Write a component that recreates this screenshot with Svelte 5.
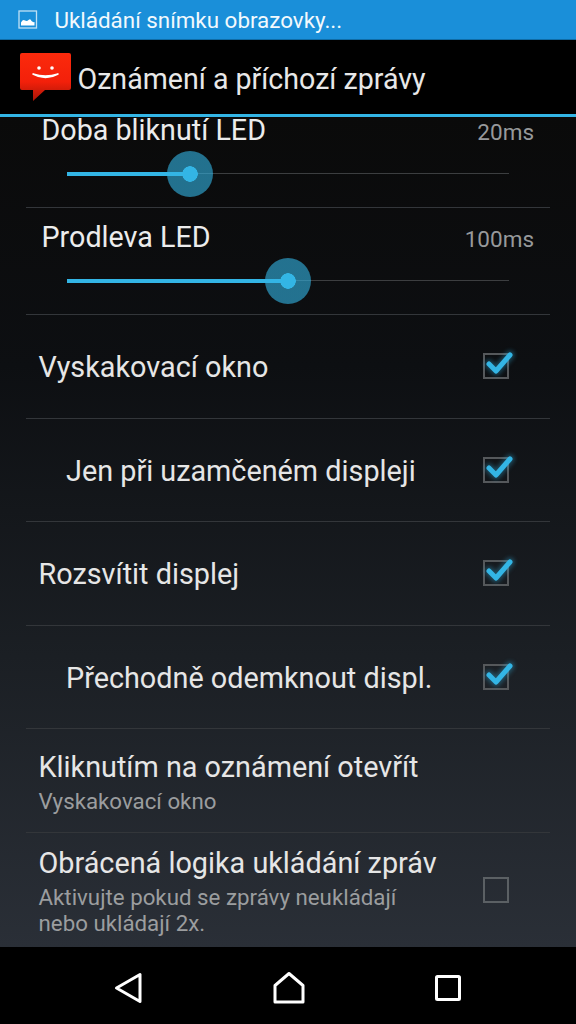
<script>
  const checks = [
    { label: 'Vyskakovací okno', indent: false },
    { label: 'Jen při uzamčeném displeji', indent: true },
    { label: 'Rozsvítit displej', indent: false },
    { label: 'Přechodně odemknout displ.', indent: true }
  ];
</script>

<div class="screen">
  <div class="status">
    <svg class="status-icon" viewBox="0 0 20 19" width="20" height="19">
      <rect x="1" y="1" width="17.5" height="17" fill="none" stroke="#bfe0f5" stroke-width="1.3"/>
      <path d="M3 15.5 V12.5 Q5 9 7 10.5 Q9 11.5 10.5 10 Q12.5 8 13.5 11 Q15 12.5 16.5 12 V15.5 Z" fill="#fff"/>
    </svg>
    <span>Ukládání snímku obrazovky...</span>
  </div>
  <header>
    <svg class="logo" viewBox="0 0 51 48" width="51" height="48">
      <defs>
        <linearGradient id="red" x1="0" y1="0" x2="0" y2="1">
          <stop offset="0" stop-color="#fb2a0c"/>
          <stop offset="0.6" stop-color="#f3200a"/>
          <stop offset="1" stop-color="#a81507"/>
        </linearGradient>
      </defs>
      <path d="M2 0 H49 Q51 0 51 2 V35 Q51 37 49 37 H25 L13 48 V37 H2 Q0 37 0 35 V2 Q0 0 2 0 Z" fill="url(#red)"/>
      <circle cx="19" cy="15" r="1.8" fill="#fff"/>
      <circle cx="32" cy="15" r="1.8" fill="#fff"/>
      <path d="M13 21 Q25.5 28 38 21 Q25.5 25 13 21 Z" fill="#fff" stroke="#fff" stroke-width="1.6" stroke-linejoin="round"/>
    </svg>
    <h1>Oznámení a příchozí zprávy</h1>
  </header>

  <main>
    <section class="slider-row first">
      <div class="slider-head">
        <span class="title">Doba bliknutí LED</span>
        <span class="value">20ms</span>
      </div>
      <div class="track">
        <div class="fill" style="width: 123px"></div>
        <div class="thumb" style="left: 123px"></div>
      </div>
    </section>
    <section class="slider-row">
      <div class="slider-head">
        <span class="title">Prodleva LED</span>
        <span class="value">100ms</span>
      </div>
      <div class="track">
        <div class="fill" style="width: 221px"></div>
        <div class="thumb" style="left: 221px"></div>
      </div>
    </section>

    {#each checks as c}
      <section class="row check-row" class:indent={c.indent}>
        <span class="label">{c.label}</span>
        <span class="box">
          <svg viewBox="0 0 40 34" width="40" height="34">
            <path class="glow" d="M10 19 L17 26 L31 10"/>
            <path class="tick" d="M10 19 L17 26 L31 10"/>
          </svg>
        </span>
      </section>
    {/each}

    <section class="row text-row one">
      <div class="text-block">
        <div class="label">Kliknutím na oznámení otevřít</div>
        <div class="sub">Vyskakovací okno</div>
      </div>
    </section>
    <section class="row text-row last">
      <div class="text-block">
        <div class="label">Obrácená logika ukládání zpráv</div>
        <div class="sub">Aktivujte pokud se zprávy neukládají<br />nebo ukládají 2x.</div>
      </div>
      <span class="box off"></span>
    </section>
  </main>

  <nav>
    <svg viewBox="0 0 28 32" width="28" height="32">
      <path d="M2.5 16 L26 2.5 V29.5 Z" fill="none" stroke="#fff" stroke-width="3" stroke-linejoin="round"/>
    </svg>
    <svg viewBox="0 0 32 32" width="32" height="32">
      <path d="M2 30 V13.5 L16 1.5 L30 13.5 V30 Z" fill="none" stroke="#fff" stroke-width="3" stroke-linejoin="round"/>
    </svg>
    <svg viewBox="0 0 26 26" width="26" height="26">
      <rect x="1.5" y="1.5" width="23" height="23" rx="1" fill="none" stroke="#fff" stroke-width="3"/>
    </svg>
  </nav>
</div>

<style>
  :global(body) {
    margin: 0;
    background: #000;
  }
  .screen {
    width: 576px;
    height: 1024px;
    display: flex;
    flex-direction: column;
    overflow: hidden;
    font-family: Roboto, "Liberation Sans", sans-serif;
    color: #e6e6e6;
  }
  .status {
    height: 39px;
    background: #1a8fd9;
    border-bottom: 1px solid #0f6ca6;
    display: flex;
    align-items: center;
    color: #f2f9fd;
    font-size: 22.4px;
    padding-left: 18px;
    gap: 16.5px;
    flex: none;
  }
  .status-icon {
    flex: none;
  }
  header {
    height: 74px;
    background: #000;
    display: flex;
    align-items: flex-start;
    padding-left: 20px;
    gap: 6.5px;
    border-bottom: 3px solid #33b5e5;
    flex: none;
  }
  .logo {
    margin-top: 13px;
    flex: none;
  }
  h1 {
    margin: 22px 0 0;
    font-weight: 400;
    font-size: 28.6px;
    line-height: 34px;
    color: #e8e8e8;
  }
  main {
    flex: 1;
    min-height: 0;
    background: linear-gradient(#0a0a0a, #0d0f12 30%, #1b1f24 65%, #2a2f37);
    padding: 0 26px;
    display: flex;
    flex-direction: column;
  }
  section {
    border-bottom: 1px solid #33363a;
    box-sizing: border-box;
    flex: none;
  }
  .slider-row {
    height: 107px;
    padding: 14px 16px 0 15.5px;
  }
  .slider-row.first {
    height: 91px;
    padding-top: 0;
  }
  .slider-row.first .slider-head {
    margin-top: -2px;
  }
  .slider-head {
    display: flex;
    justify-content: space-between;
    align-items: flex-end;
    height: 30px;
  }
  .title {
    font-size: 28.7px;
    line-height: 30px;
    color: #ececec;
  }
  .value {
    font-size: 22.5px;
    line-height: 26px;
    color: #97999b;
  }
  .track {
    position: relative;
    height: 1px;
    background: #3c3e40;
    margin: 28px 25.5px 0;
    width: 442px;
  }
  .fill {
    position: absolute;
    left: 0;
    top: -1px;
    height: 4px;
    background: #33b5e5;
  }
  .thumb {
    position: absolute;
    top: 1px;
    width: 46px;
    height: 46px;
    margin: -23px 0 0 -23px;
    border-radius: 50%;
    background: radial-gradient(circle, #33b5e5 0, #33b5e5 7.5px, rgba(51, 181, 229, 0.6) 8px);
  }
  .row {
    display: flex;
    align-items: center;
    justify-content: space-between;
    padding: 0 41px 0 12.5px;
  }
  .check-row {
    height: 103.5px;
  }
  .check-row.indent {
    padding-left: 40px;
  }
  .check-row .label {
    margin-top: 2px;
  }
  .label {
    font-size: 28.8px;
    line-height: 34px;
    color: #e6e6e6;
  }
  .box {
    position: relative;
    width: 26px;
    height: 26px;
    box-sizing: border-box;
    border: 2px solid #55585b;
    flex: none;
    display: block;
  }
  .box svg {
    position: absolute;
    left: -6px;
    top: -10px;
  }
  .box.off {
    border-color: #5b6064;
  }
  .glow {
    fill: none;
    stroke: rgba(51, 181, 229, 0.35);
    stroke-width: 9;
    stroke-linecap: round;
    stroke-linejoin: round;
    filter: blur(2px);
  }
  .tick {
    fill: none;
    stroke: #33b5e5;
    stroke-width: 5;
    stroke-linecap: round;
    stroke-linejoin: round;
  }
  .text-block {
    padding-top: 2px;
  }
  .text-row.one {
    height: 104px;
  }
  .text-row.last {
    border-bottom: 0;
    flex: 1;
    min-height: 0;
  }
  .sub {
    font-size: 22.3px;
    line-height: 26px;
    color: #9b9d9f;
    margin-top: 4px;
  }
  nav {
    height: 77px;
    background: #000;
    flex: none;
    display: flex;
    align-items: center;
    justify-content: space-between;
    padding: 4px 115px 0 114px;
    box-sizing: border-box;
  }
</style>
